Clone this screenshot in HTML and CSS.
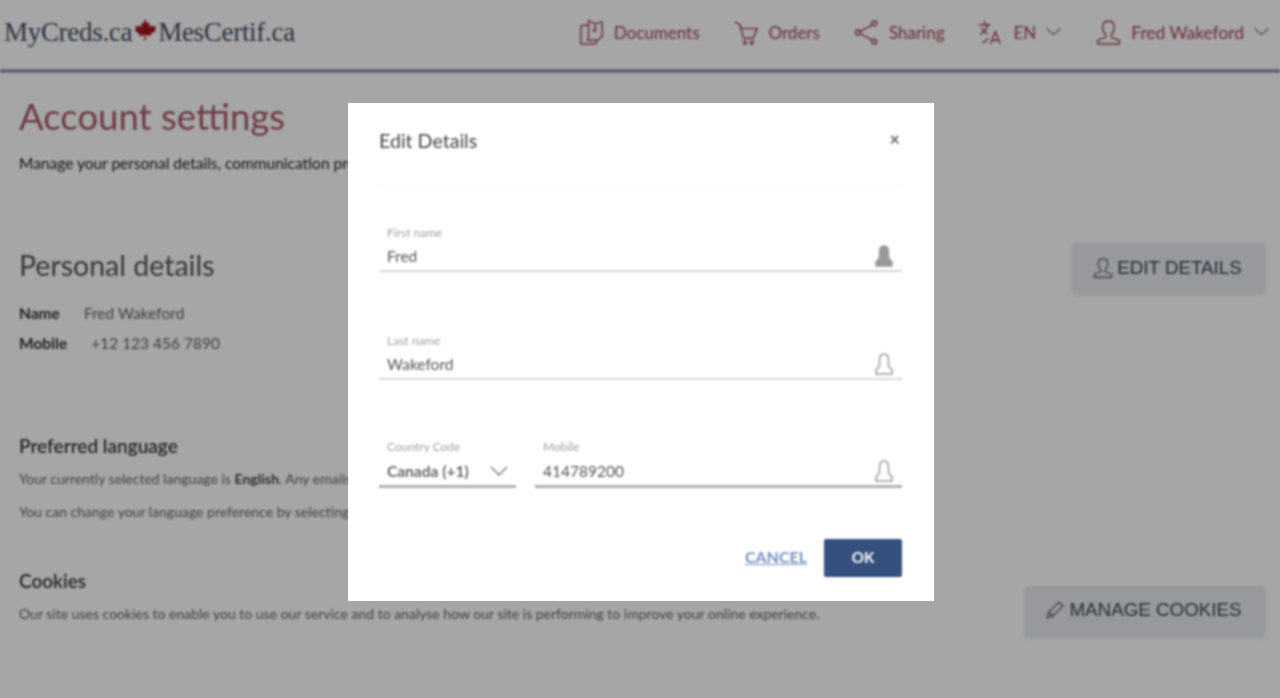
FILE: index.html
```html
<!DOCTYPE html>
<html>
<head>
    <title>Account settings</title>
    <link rel="stylesheet" href="styles.css">
</head>
<body>
    <div class="page">
        <header class="topbar">
            <div class="logo">
                <span>MyCreds.ca</span>
                <svg class="leaf" viewBox="0 0 24 24"><path d="M12 1l2.400 4.400 2.200-1-.7 5.200 2.900-2.700.8 1.900 3.400-.6-1.100 3.600 1.400.8L17.500 16l.6 1.900-5.500-.8.2 5.400h-1.600l.2-5.400-5.500.8.6-1.900L1.600 12.600l1.400-.8-1.100-3.600 3.400.6.8-1.900 2.900 2.700-.7-5.200 2.200 1z"/></svg>
                <span>MesCertif.ca</span>
            </div>
            <nav class="nav">
                <a class="navItem">
                    <svg class="icon" viewBox="0 0 28 28"><path d="M3 7v19h15l2-4M3 7l8-1M11 2v16l-1 4h10l5-4V3l-7 2-7-3zM18 5v8l-3-2"/></svg>
                    Documents
                </a>
                <a class="navItem">
                    <svg class="icon" viewBox="0 0 28 28"><path d="M2 3l5 3 2 4h16l-4 10H11L7 6M11 24.500a1.500 1.500 0 1 0 3 0 1.500 1.500 0 1 0-3 0M18 24.500a1.500 1.500 0 1 0 3 0 1.500 1.500 0 1 0-3 0"/></svg>
                    Orders
                </a>
                <a class="navItem">
                    <svg class="icon" viewBox="0 0 28 28"><circle cx="5" cy="14" r="2.500"/><circle cx="22" cy="4.500" r="2.500"/><circle cx="22" cy="23.500" r="2.500"/><path d="M7 13L20 6M7 15l13 7"/></svg>
                    Sharing
                </a>
                <a class="navItem navLang">
                    <svg class="icon" viewBox="0 0 28 28"><path d="M2 6h12M8 2v4M11 6c-1 5-4 8-8 10M5 9c1 3 3 5 6 6M14 26l5-13 5 13M16 22h6M6 25l6-5"/></svg>
                    EN
                    <svg class="chevron" viewBox="0 0 16 10"><path d="M1 1l7 7 7-7"/></svg>
                </a>
                <a class="navItem navUser">
                    <svg class="icon" viewBox="0 0 28 28"><path d="M14 2c-4 0-6 3-6 7 0 3 1 5 3 7v3l-8 3v4h22v-4l-8-3v-3c2-2 3-4 3-7 0-4-2-7-6-7z"/></svg>
                    Fred Wakeford
                    <svg class="chevron" viewBox="0 0 16 10"><path d="M1 1l7 7 7-7"/></svg>
                </a>
            </nav>
        </header>

        <main class="content">
            <h1>Account settings</h1>
            <p class="intro">Manage your personal details, communication preferences</p>

            <section class="detailsRow">
                <div class="detailsCol">
                    <h2>Personal details</h2>
                    <div class="detailLine"><b>Name</b><span>Fred Wakeford</span></div>
                    <div class="detailLine detailMobile"><b>Mobile</b><span>+12 123 456 7890</span></div>
                </div>
                <button class="pageBtn editBtn">
                    <svg class="btnIcon" viewBox="0 0 28 28"><path d="M14 2c-4 0-6 3-6 7 0 3 1 5 3 7v3l-8 3v4h22v-4l-8-3v-3c2-2 3-4 3-7 0-4-2-7-6-7z"/></svg>
                    EDIT DETAILS
                </button>
            </section>

            <section class="language">
                <h3>Preferred language</h3>
                <p>Your currently selected language is <b>English</b>. Any emails</p>
                <p class="langHint">You can change your language preference by selecting</p>
            </section>

            <section class="cookiesRow">
                <div>
                    <h3>Cookies</h3>
                    <p class="cookieText">Our site uses cookies to enable you to use our service and to analyse how our site is performing to improve your online experience.</p>
                </div>
                <button class="pageBtn cookieBtn">
                    <svg class="btnIcon" viewBox="0 0 28 28"><path d="M4 24l2-7L19 4l5 5-13 13zM6 17l5 5"/></svg>
                    MANAGE COOKIES
                </button>
            </section>
        </main>
    </div>

    <div class="overlay">
        <div class="modal">
            <div class="modalInner">
                <div class="modalHead">
                    <span class="modalTitle">Edit Details</span>
                    <span class="closeBtn">×</span>
                </div>

                <div class="field fieldFirst">
                    <label>First name</label>
                    <div class="fieldValue">
                        <span>Fred</span>
                        <svg class="lockIcon lockSolid" viewBox="0 0 20 22"><path d="M10 1C6.500 1 5.500 4 5.500 7v6L2 17v4h16v-4l-3.500-4V7c0-3-1-6-4.500-6z"/></svg>
                    </div>
                </div>

                <div class="field fieldLast">
                    <label>Last name</label>
                    <div class="fieldValue">
                        <span>Wakeford</span>
                        <svg class="lockIcon" viewBox="0 0 20 22"><path d="M10 1C6.500 1 5.500 4 5.500 7v6L2 17v4h16v-4l-3.500-4V7c0-3-1-6-4.500-6z"/></svg>
                    </div>
                </div>

                <div class="phoneRow">
                    <div class="field fieldCode">
                        <label>Country Code</label>
                        <div class="fieldValue">
                            <span class="codeText">Canada (+1)</span>
                            <svg class="selectArrow" viewBox="0 0 18 10"><path d="M1 1l8 8 8-8"/></svg>
                        </div>
                    </div>
                    <div class="field fieldMobile">
                        <label>Mobile</label>
                        <div class="fieldValue">
                            <span>414789200</span>
                            <svg class="lockIcon" viewBox="0 0 20 22"><path d="M10 1C6.500 1 5.500 4 5.500 7v6L2 17v4h16v-4l-3.500-4V7c0-3-1-6-4.500-6z"/></svg>
                        </div>
                    </div>
                </div>

                <div class="modalActions">
                    <a class="cancelLink">CANCEL</a>
                    <button class="okBtn">OK</button>
                </div>
            </div>
        </div>
    </div>
</body>
</html>
```

FILE: styles.css
```css
html, body {
    margin: 0;
    height: 698px;
    overflow: hidden;
    background: #fff;
    font-family: "Lato", "Liberation Sans", sans-serif;
    color: #333;
}

.page {
    filter: blur(1.1px);
}

.topbar {
    display: flex;
    align-items: center;
    justify-content: space-between;
    height: 64px;
    padding: 0 10px 5px 4px;
    border-bottom: 4px solid #9aa0b8;
    background: #fff;
}

.logo {
    display: flex;
    align-items: center;
    font-family: "Liberation Serif", serif;
    font-size: 27px;
    letter-spacing: -0.3px;
    color: #4a5064;
}

.leaf {
    width: 24px;
    height: 24px;
    fill: #a3151f;
    margin: -5px 1px 0;
}

.nav {
    display: flex;
    align-items: center;
    gap: 33px;
}

.navItem {
    display: flex;
    align-items: center;
    gap: 9px;
    font-size: 17px;
    color: #a8505f;
}

.navUser {
    font-size: 17.400px;
}

.icon {
    width: 27px;
    height: 27px;
    fill: none;
    stroke: #a04a5a;
    stroke-width: 1.500;
}

.chevron {
    width: 17px;
    height: 10px;
    fill: none;
    stroke: #808080;
    stroke-width: 1.200;
}

.content {
    padding: 21px 15px 0 19px;
}

h1 {
    margin: 0;
    font-size: 36.500px;
    font-weight: 400;
    line-height: 44px;
    color: #ab5a6c;
}

.intro {
    margin: 16px 0 0;
    font-size: 15.500px;
    line-height: 18px;
    color: #222;
}

.detailsRow {
    display: flex;
    justify-content: space-between;
    align-items: flex-start;
    margin-top: 71px;
}

.detailsCol {
    margin-top: 5px;
}

h2 {
    margin: 0;
    font-size: 28.500px;
    font-weight: 400;
    line-height: 34px;
    color: #555;
}

.detailLine {
    display: flex;
    gap: 24px;
    margin-top: 22px;
    font-size: 15.500px;
    line-height: 18px;
}

.detailLine span {
    color: #666;
}

.detailMobile {
    margin-top: 12px;
}

.pageBtn {
    display: flex;
    align-items: center;
    justify-content: center;
    height: 50px;
    border: 0;
    border-radius: 3px;
    background: #e8ebf0;
    box-shadow: 0 2px 5px rgba(0, 0, 0, 0.1);
    font-family: "Liberation Sans", sans-serif;
    font-size: 18.800px;
    color: #3a4658;
}

.btnIcon {
    width: 22px;
    height: 22px;
    fill: none;
    stroke: #555;
    stroke-width: 1.500;
    margin-right: 3px;
}

.editBtn {
    width: 193px;
    padding: 0 3px 1px 0;
}

h3 {
    margin: 0;
    font-size: 19px;
    font-weight: 600;
    line-height: 22px;
    color: #3a3a3a;
}

.language {
    margin-top: 83px;
}

.language p, .cookieText {
    margin: 13px 0 0;
    font-size: 14px;
    line-height: 18px;
    color: #666;
}

.language b {
    color: #444;
}

.language .langHint {
    margin-top: 15px;
}

.cookiesRow {
    display: flex;
    justify-content: space-between;
    align-items: flex-start;
    margin-top: 49px;
}

.cookieBtn {
    width: 240px;
    margin-top: 16px;
    padding: 0 4px 2px 0;
}

/* modal on top of the dimmed page */
.overlay {
    position: absolute;
    inset: 0;
    display: flex;
    justify-content: center;
    align-items: flex-start;
    padding: 103px 0 0 2px;
    background: rgba(0, 0, 0, 0.35);
}

.modal {
    width: 586px;
    height: 498px;
    background: #fff;
}

.modalInner {
    padding: 0 32px 0 31px;
    filter: blur(0.9px);
}

.modalHead {
    display: flex;
    justify-content: space-between;
    align-items: center;
    box-sizing: border-box;
    height: 84px;
    padding-bottom: 9px;
    border-bottom: 1px solid #f5f5f5;
}

.modalTitle {
    font-size: 19.600px;
    color: #444;
}

.closeBtn {
    margin: -2px 2px 0 0;
    font-size: 18px;
    font-weight: 700;
    color: #666;
}

.field label {
    display: block;
    padding-left: 8px;
    font-size: 12px;
    line-height: 14px;
    color: #a0a0a0;
}

.fieldValue {
    display: flex;
    justify-content: space-between;
    align-items: center;
    height: 27px;
    padding: 2px 8px 1px;
    border-bottom: 2px solid #d8d8d8;
    font-size: 15.500px;
    color: #555;
}

.fieldFirst {
    margin-top: 39px;
}

.fieldLast {
    margin-top: 62px;
}

.phoneRow {
    display: flex;
    gap: 19px;
    margin-top: 60px;
}

.fieldCode {
    width: 137px;
}

.fieldMobile {
    flex: 1;
}

.phoneRow .fieldValue {
    height: 28px;
    padding: 3px 8px 0;
    border-bottom: 3px solid #aab0b8;
}

.codeText {
    font-weight: 700;
    color: #666;
}

.lockIcon {
    width: 20px;
    height: 22px;
    fill: none;
    stroke: #999;
    stroke-width: 1.500;
}

.lockSolid {
    fill: #999;
}

.selectArrow {
    width: 18px;
    height: 10px;
    fill: none;
    stroke: #808080;
    stroke-width: 1.500;
}

.modalActions {
    display: flex;
    justify-content: flex-end;
    align-items: center;
    gap: 17px;
    margin-top: 51px;
}

.cancelLink {
    margin-bottom: 3px;
    font-size: 16px;
    font-weight: 700;
    color: #7692bb;
    text-decoration: underline;
}

.okBtn {
    width: 78px;
    height: 38px;
    padding-bottom: 3px;
    border: 0;
    border-radius: 2px;
    background: #34507f;
    font-family: "Lato", sans-serif;
    font-size: 15px;
    font-weight: 700;
    color: #fff;
}
```
